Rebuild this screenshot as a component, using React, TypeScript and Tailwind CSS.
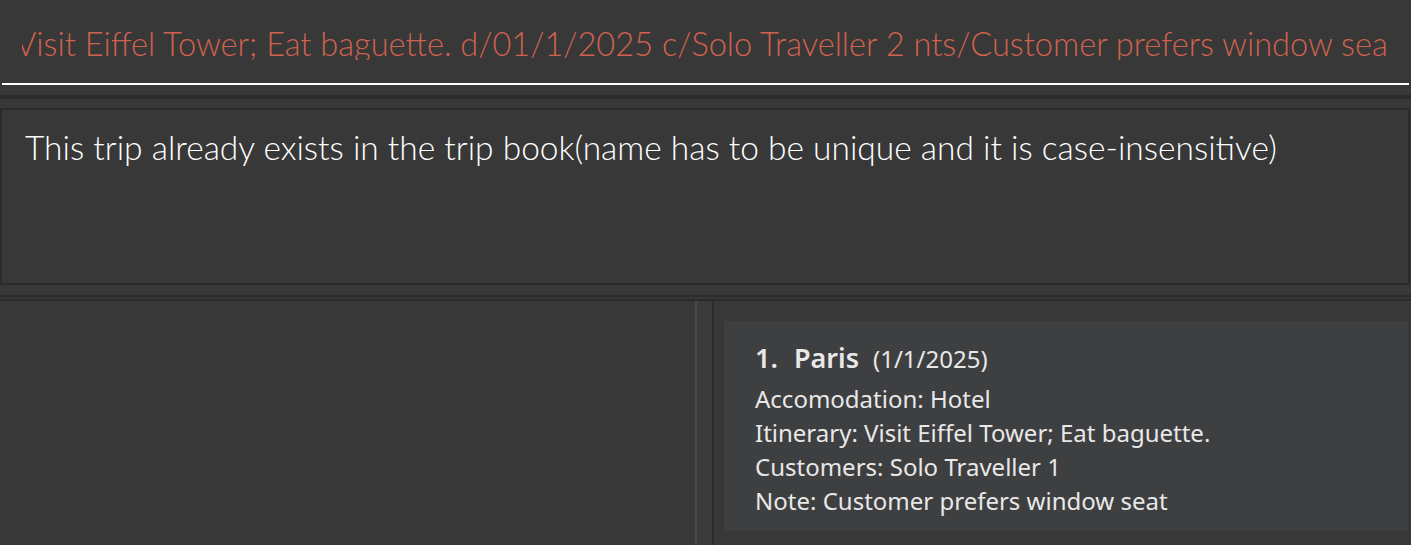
export default function App() {
  const command =
    'Visit Eiffel Tower; Eat baguette. d/01/1/2025 c/Solo Traveller 2 nts/Customer prefers window seat';

  return (
    <div className="w-[1411px] h-[545px] bg-[#383838] overflow-hidden flex flex-col font-['Lato',sans-serif]">
      {/* command box */}
      <div className="h-[85px] flex flex-col">
        <div className="flex-1 flex items-center pl-[22px] pr-[23px] pt-[5px]">
          <div className="flex-1 overflow-hidden">
            <span className="block whitespace-nowrap -ml-[7px] text-[32.6px] font-light text-[#d0624f] leading-none">
              {command}
            </span>
          </div>
        </div>
        <div className="h-[2px] mx-[2px] bg-white" />
      </div>

      <div className="h-[10px]" />
      <div className="h-[4px] bg-[#2b2b2b]" />
      <div className="h-[9px]" />

      {/* result display */}
      <div className="h-[177px] mr-[1px] border-2 border-[#2b2b2b] pl-[23px] pt-[17px]">
        <p className="text-[33.5px] font-light text-white leading-tight">
          This trip already exists in the trip book(name has to be unique and it is case-insensitive)
        </p>
      </div>

      <div className="h-[10px]" />
      <div className="h-[2px] bg-[#2b2b2b]" />
      <div className="h-[2px]" />
      <div className="h-[2px] bg-[#2b2b2b]" />

      {/* panes */}
      <div className="flex-1 flex">
        <div className="w-[695px]" />
        <div className="w-[2px] bg-[#4a4a4a]" />
        <div className="w-[15px] bg-[#3a3a3a]" />
        <div className="flex-1 border-l-2 border-[#2b2b2b] pl-[10px] pt-[20px] pr-[3px]">
          <div className="h-[210px] bg-[#3e3f41] pl-[31px] pt-[18px] text-[#e8e8e8] font-['Noto_Sans',sans-serif]">
            <div className="flex items-baseline leading-[38px]">
              <span className="text-[27px] font-semibold">1.</span>
              <span className="text-[27px] font-semibold ml-[16px]">Paris</span>
              <span className="text-[24px] ml-[14px]">(1/1/2025)</span>
            </div>
            <div className="text-[24px] leading-[34px] mt-[4px]">
              <div>Accomodation: Hotel</div>
              <div>Itinerary: Visit Eiffel Tower; Eat baguette.</div>
              <div>Customers: Solo Traveller 1</div>
              <div>Note: Customer prefers window seat</div>
            </div>
          </div>
        </div>
      </div>
    </div>
  );
}
